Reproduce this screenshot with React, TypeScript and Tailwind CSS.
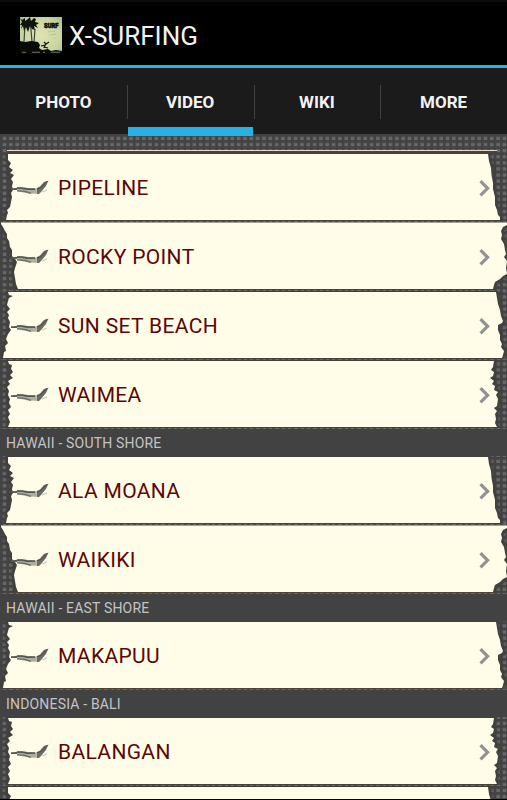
import clsx from "clsx";

type Tear = "a" | "b" | "c" | "d";

const TABS = ["PHOTO", "VIDEO", "WIKI", "MORE"];

const SECTIONS: { title?: string; spots: { name: string; tear: Tear }[] }[] = [
  {
    spots: [
      { name: "PIPELINE", tear: "a" },
      { name: "ROCKY POINT", tear: "b" },
      { name: "SUN SET BEACH", tear: "c" },
      { name: "WAIMEA", tear: "d" },
    ],
  },
  {
    title: "HAWAII - SOUTH SHORE",
    spots: [
      { name: "ALA MOANA", tear: "a" },
      { name: "WAIKIKI", tear: "b" },
    ],
  },
  { title: "HAWAII - EAST SHORE", spots: [{ name: "MAKAPUU", tear: "c" }] },
  {
    title: "INDONESIA - BALI",
    spots: [
      { name: "BALANGAN", tear: "d" },
      { name: "", tear: "a" },
    ],
  },
];

// Ragged paper outlines, one per background variant
const TEARS: Record<Tear, string> = {
  a: "M8 1L488 1L489 8L491 15L491.5 22L493 30L493 36L495 44L495 52L497 57L498 62L500 64L500 67L6 67L7 62L8 60L7 57L10 54L11 49L12 44L11 40L13 37L12 33L13 29L11 26L14 22L10 20L13 17L9 14L11 10L8 7Z",
  b: "M1 0.5L507 0.5L507 3L503 5L501 9L502 13L501 17L504 22L505 28L506 32L504 35L507 39L506 46L507 52L503 54L500 57L495 60L494 63L493 67L18 67L16 62L15 56L14 50L15 46L17 40L15 37L12 34L12 28L10 25L9 19L7 16L7 12L5 9L3 5L1 2Z",
  c: "M8 1L496 1L497 7L498 13L500 19L501 25L503 30L502 32L498 34L498 39L500 44L500 49L502 53L501 56L504 60L503 64L502 67L3 67L4 61L6 60L5 55L8 52L6 48L8 43L11 39L9 36L10 31L8 27L9 24L7 21L10 18L7 14L8 10L9 7L13 5L9 4Z",
  d: "M8 1L494 1L493 7L491 10L494 12L493 16L490 18L494 21L492 24L495 26L494 30L498 32L496 35L498 39L497 46L494 48L497 51L495 54L496 59L495 63L497 67L8 67L10 62L8 57L10 54L8 50L11 47L9 43L10 39L8 35L9 31L7 27L10 24L8 21L13 18L10 15L13 12L11 9L12 5L9 4Z",
};

function Paper({ tear }: { tear: Tear }) {
  return (
    <svg
      className="absolute inset-0 h-[69px] w-[507px]"
      viewBox="0 0 507 69"
      aria-hidden="true"
    >
      <defs>
        <filter id={`shade-${tear}`} x="-2%" y="-10%" width="104%" height="120%">
          <feGaussianBlur stdDeviation="1.2" />
        </filter>
        <filter id={`soft-${tear}`} x="-2%" y="-5%" width="104%" height="110%">
          <feGaussianBlur stdDeviation="0.7 0.2" />
        </filter>
      </defs>
      <path
        d={TEARS[tear]}
        fill="#3b3b39"
        stroke="#3f3f3d"
        strokeWidth="6"
        filter={`url(#shade-${tear})`}
      />
      <path d={TEARS[tear]} fill="#fffde8" filter={`url(#soft-${tear})`} />
    </svg>
  );
}

function Plane() {
  return (
    <svg className="h-[16px] w-[38px]" viewBox="0 0 38 16" aria-hidden="true">
      <defs>
        <filter id="smudge" x="-10%" y="-20%" width="120%" height="140%">
          <feGaussianBlur stdDeviation="0.75" />
        </filter>
      </defs>
      <g filter="url(#smudge)">
        <path d="M4 8L9 7L14 7.8L25 8.4L26 13.8L17 13.6L9 11.8Z" fill="#aeada0" />
        <path d="M0 9.2L6 9M6 8.2L11 8.2L16 9L24 9.2" stroke="#5a5a54" strokeWidth="1.8" fill="none" />
        <path d="M6 10.8L14 11.4L20 13.4" stroke="#6d6d66" strokeWidth="1.4" fill="none" />
        <path d="M26 14L25.5 8.2L29 6.4L33 2L37.5 0.4L35 6L30 12L28 14Z" fill="#6c6c65" />
        <path d="M26 9L30 7.5L36 1.4" stroke="#55554f" strokeWidth="1.2" fill="none" />
        <path d="M31 12L36 10" stroke="#c9c8ba" strokeWidth="1.2" />
      </g>
    </svg>
  );
}

function Chevron() {
  return (
    <svg className="h-[18px] w-[12px]" viewBox="0 0 12 18" fill="none" aria-hidden="true">
      <path d="M1.5 2.2L8.6 9.3L1.5 16.4" stroke="#929294" strokeWidth="3.2" />
    </svg>
  );
}

function Logo() {
  return (
    <svg className="h-[37px] w-[42px]" viewBox="0 0 42 37" aria-hidden="true">
      <defs>
        <radialGradient id="sky" cx="0.5" cy="0.5" r="0.75">
          <stop offset="0" stopColor="#e0e3b4" />
          <stop offset="0.6" stopColor="#c9d6a2" />
          <stop offset="1" stopColor="#9fb68a" />
        </radialGradient>
      </defs>
      <rect width="42" height="37" fill="url(#sky)" />
      <path d="M5 7L4 25M10.5 7L12 25M15 12L14 25" stroke="#3b4638" strokeWidth="1.2" />
      <path
        d="M0 1L2 3L5 1L5 4L8 2L10 0L11 4L14 1L16 2L15 5L19 6L16 8L18 11L14 9L15 13L12 12L10 9L9 12L8 15L6 10L4 14L3 9L1 12L2 8L0 8L2 5Z"
        fill="#10140e"
      />
      <path
        d="M0 24L5 25L11 24L18 25L20 28L19 31L22 33L28 32L31 34L36 33L42 34L42 37L0 37Z"
        fill="#080b08"
      />
      <path d="M24 25L26 27L24 30L28 31M26 27L29 25M21 29L25 28" stroke="#11150f" strokeWidth="1.2" fill="none" />
      <path d="M30 18L36 17M28 15L35 14M34 21L35 22" stroke="#aab98a" strokeWidth="0.7" />
      <path d="M2 35.3H6M12 35.3H20M23 35.3H25M31 35.3H40" stroke="#6f795c" strokeWidth="1.1" />
      <text
        x="24"
        y="11.2"
        fontSize="7.6"
        fontWeight="900"
        fontFamily="Roboto, sans-serif"
        fill="#0b0d0a"
        stroke="#0b0d0a"
        strokeWidth="0.6"
        textLength="14.5"
        lengthAdjust="spacingAndGlyphs"
      >
        SURF
      </text>
    </svg>
  );
}

function SpotRow({ name, tear }: { name: string; tear: Tear }) {
  return (
    <li className="relative h-[69px] shrink-0">
      <Paper tear={tear} />
      <span className="absolute right-[14px] bottom-[1px] left-[8px] h-px bg-[#4d4334]" />
      <span className="absolute inset-x-0 bottom-0 h-px bg-[repeating-linear-gradient(90deg,#4b4b49_0_3px,#686866_3px_6.33px)]" />
      {name && (
        <div className="relative flex h-full items-center pr-[16px] pl-[11px]">
          <Plane />
          <span className="ml-[9px] grow pt-px text-[21px] leading-none tracking-[0.35px] text-[#5c0606]">
            {name}
          </span>
          <Chevron />
        </div>
      )}
    </li>
  );
}

export default function App() {
  return (
    <div className="flex h-[800px] w-[507px] flex-col overflow-hidden border-b border-black bg-black font-['Roboto',sans-serif]">
      <header className="flex h-[65px] shrink-0 items-center border-t-2 border-[#0c0c0c] pt-[6px] pb-[2px] pl-[20px]">
        <Logo />
        <h1 className="ml-[7px] text-[26px] leading-none text-[#f2f2f2]">X-SURFING</h1>
      </header>
      <nav className="flex h-[69px] shrink-0 border-t-[3px] border-[#28b1e5] bg-[#1b1b1b]">
        {TABS.map((tab, i) => (
          <div
            key={tab}
            className="relative flex flex-1 items-center justify-center pt-[3px] text-[17px] leading-none font-bold text-[#f3f3f3]"
          >
            {i > 0 && <span className="absolute top-[17px] left-0 h-[34px] w-px bg-[#404040]" />}
            {tab}
            {tab === "VIDEO" && (
              <span className="absolute top-[59px] right-px left-[1px] z-10 h-[9px] bg-[#28b1e5]" />
            )}
          </div>
        ))}
      </nav>
      <main className="relative min-h-0 grow overflow-hidden bg-[#686868] bg-[linear-gradient(90deg,#434343_2.9px,transparent_3.1px),linear-gradient(#434343_2.9px,transparent_3.1px)] bg-[size:6.33px_6.1px] pt-[16px]">
        <div className="mr-[10px] ml-[7px] h-[3px] border-b-2 border-[#4b403b] bg-[#e6dccb]" />
        {SECTIONS.map((section, i) => (
          <section key={i}>
            {section.title && (
              <h2
                className={clsx(
                  "relative flex h-[27px] items-center bg-[#424242] pl-[6px]",
                  "text-[14px] leading-none tracking-[0.18px] text-[#c4c4c4]",
                )}
              >
                {section.title}
              </h2>
            )}
            <ul>
              {section.spots.map((spot, j) => (
                <SpotRow key={j} {...spot} />
              ))}
            </ul>
          </section>
        ))}
      </main>
    </div>
  );
}
